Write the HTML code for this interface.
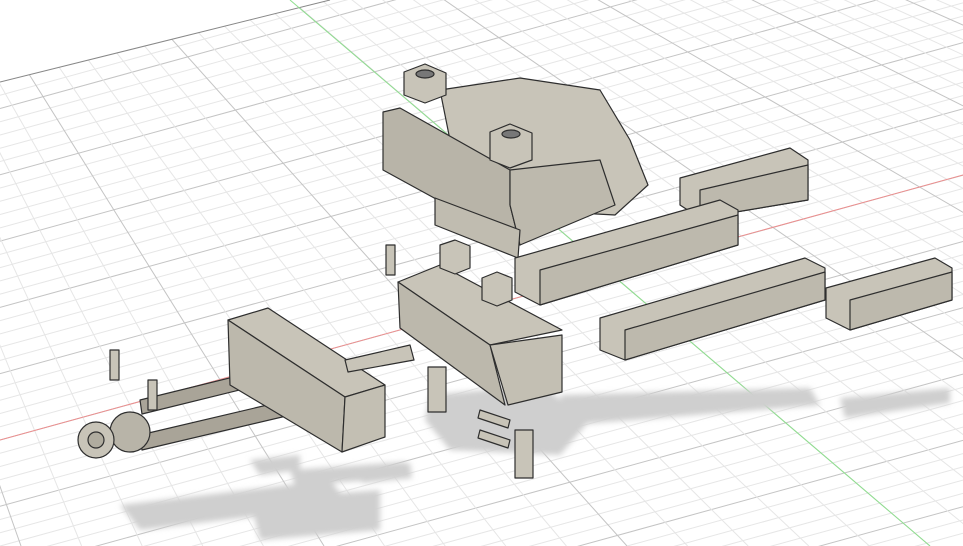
<!DOCTYPE html>
<html><head><meta charset="utf-8"><style>
html,body{margin:0;padding:0;background:#fff;width:963px;height:546px;overflow:hidden}
svg{display:block;overflow:hidden}
</style></head><body>
<svg id="s" width="963" height="546" viewBox="0 0 963 546" xmlns="http://www.w3.org/2000/svg">
<defs>
<clipPath id="c"><polygon points="0,82 330,0 963,0 963,546 0,546"/></clipPath>
<filter id="b"><feGaussianBlur stdDeviation="3"/></filter>
</defs>
<g id="grid" clip-path="url(#c)" stroke-width="1"></g>
<line x1="0" y1="82" x2="330" y2="0" stroke="#888" stroke-width="1"/>
<line x1="0" y1="440" x2="963" y2="175" stroke="#ec8f8f" stroke-width="1"/>
<line x1="290" y1="0" x2="930" y2="546" stroke="#8fe08f" stroke-width="1"/>
<g fill="#cfcfcf" filter="url(#b)">
<polygon points="560,395 810,388 820,405 570,425"/>
<polygon points="840,398 950,388 950,403 845,418"/>
<polygon points="430,395 540,385 590,420 560,455 450,450 425,420"/>
<polygon points="250,460 300,455 300,470 260,475"/>
<polygon points="290,470 405,462 410,478 295,485"/>
<polygon points="120,505 330,480 350,505 140,530"/>
<polygon points="250,500 380,490 380,530 260,540"/>
<polygon points="360,468 410,463 412,478 362,483"/>
</g>
<g stroke="#2e2e2e" stroke-width="1.2" stroke-linejoin="round">
<polygon points="440,90 520,78 600,90 630,140 648,185 615,215 560,212 520,200 450,140" fill="#c8c4b8"/>
<polygon points="383,112 400,108 510,170 510,205 520,245 383,170" fill="#b8b4a8"/>
<polygon points="510,170 600,160 615,205 520,245 510,205" fill="#bdb9ad"/>
<polygon points="435,198 520,230 518,258 435,225" fill="#c0bcb0"/>
<polygon points="404,72 425,64 446,73 446,95 425,103 404,95" fill="#c8c4b8"/>
<polygon points="490,132 510,124 532,133 532,160 510,168 490,160" fill="#c8c4b8"/>
<ellipse cx="425" cy="74" rx="9" ry="4" fill="#777"/>
<ellipse cx="511" cy="134" rx="9" ry="4" fill="#777"/>
<polygon points="680,178 790,148 808,160 808,200 700,218 680,205" fill="#c8c4b8"/>
<polygon points="700,190 808,165 808,200 700,218" fill="#bdb9ad"/>
<polygon points="515,258 720,200 738,210 738,245 540,305 515,292" fill="#c8c4b8"/>
<polygon points="540,270 738,215 738,245 540,305" fill="#bdb9ad"/>
<polygon points="600,318 805,258 825,268 825,300 625,360 600,350" fill="#c8c4b8"/>
<polygon points="625,330 825,272 825,300 625,360" fill="#bdb9ad"/>
<polygon points="826,288 935,258 952,268 952,300 850,330 826,318" fill="#c8c4b8"/>
<polygon points="850,300 952,272 952,300 850,330" fill="#bdb9ad"/>
<polygon points="398,282 440,265 562,330 490,345" fill="#c8c4b8"/>
<polygon points="398,282 490,345 505,405 400,328" fill="#bcb8ac"/>
<polygon points="490,345 562,335 562,392 508,405" fill="#c3bfb3"/>
<polygon points="440,245 455,240 470,246 470,268 455,274 440,268" fill="#c8c4b8"/>
<polygon points="482,278 497,272 512,278 512,300 497,306 482,300" fill="#c8c4b8"/>
<rect x="386" y="245" width="9" height="30" fill="#c8c4b8"/>
<polygon points="140,400 270,368 272,382 142,414" fill="#a9a498"/>
<polygon points="140,435 310,395 312,410 142,450" fill="#a9a498"/>
<polygon points="228,320 268,308 385,385 345,397" fill="#c8c4b8"/>
<polygon points="228,320 345,397 342,452 230,385" fill="#bcb8ac"/>
<polygon points="345,397 385,385 385,437 342,452" fill="#c3bfb3"/>
<polygon points="345,360 410,345 414,360 348,372" fill="#c8c4b8"/>
<rect x="110" y="350" width="9" height="30" fill="#c8c4b8"/>
<rect x="148" y="380" width="9" height="30" fill="#c8c4b8"/>
<circle cx="130" cy="432" r="20" fill="#b8b4a8"/>
<circle cx="96" cy="440" r="18" fill="#c8c4b8"/>
<circle cx="96" cy="440" r="8" fill="#b0ac9f"/>
<rect x="428" y="367" width="18" height="45" fill="#c8c4b8"/>
<rect x="515" y="430" width="18" height="48" fill="#c8c4b8"/>
<polygon points="480,410 510,420 508,428 478,418" fill="#c8c4b8"/>
<polygon points="480,430 510,440 508,448 478,438" fill="#c8c4b8"/>
</g>
</svg>
<script>
var g=document.getElementById('grid'),ns='http://www.w3.org/2000/svg';
function L(a,b,c,d,col){var l=document.createElementNS(ns,'line');l.setAttribute('x1',a);l.setAttribute('y1',b);l.setAttribute('x2',c);l.setAttribute('y2',d);l.setAttribute('stroke',col);g.appendChild(l);}
var m=-0.275,sp=13.26;
for(var k=-30;k<30;k++){var y0=440+k*sp;L(0,y0,963,y0+m*963,k%5==0?'#c4c4c4':'#e6e6e6');}
var vx=-370,vy=-564;
for(var k=-30;k<40;k++){var xb=930+k*60.6;L(vx,vy,xb,546,k%5==0?'#c4c4c4':'#e6e6e6');}
</script>
</body></html>
